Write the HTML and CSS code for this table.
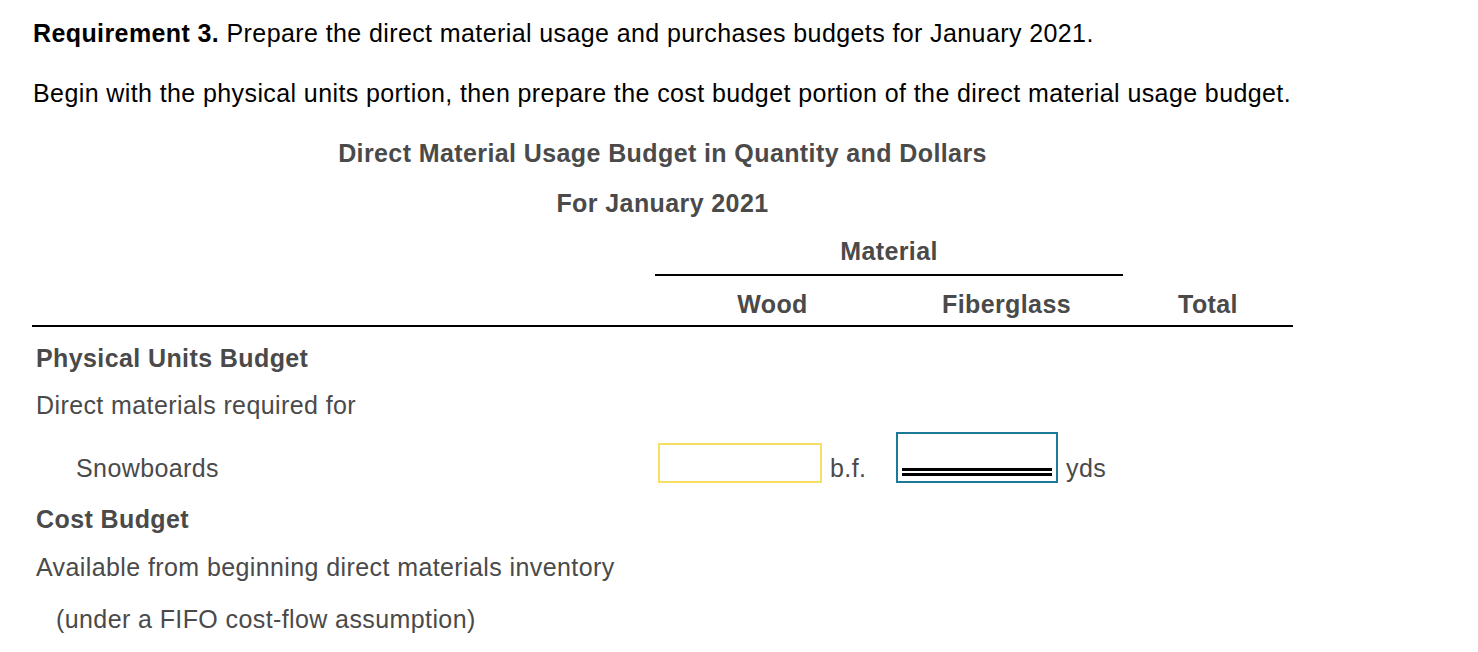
FILE: index.html
```html
<!DOCTYPE html>
<html>
<head>
<meta charset="utf-8">
<link rel="stylesheet" href="styles.css">
</head>
<body>
<div class="page">
  <p class="req"><b>Requirement 3.</b> Prepare the direct material usage and purchases budgets for January 2021.</p>
  <p class="intro">Begin with the physical units portion, then prepare the cost budget portion of the direct material usage budget.</p>
  <div class="budget">
    <div class="title">Direct Material Usage Budget in Quantity and Dollars</div>
    <div class="subtitle">For January 2021</div>
    <div class="grid">
      <div></div>
      <div class="material">Material</div>
      <div></div>

      <div class="hcell"></div>
      <div class="hcell center">Wood</div>
      <div class="hcell center">Fiberglass</div>
      <div class="hcell center">Total</div>

      <div class="row-label bold r1">Physical Units Budget</div>
      <div class="span3"></div>

      <div class="row-label r2">Direct materials required for</div>
      <div class="span3"></div>

      <div class="row-label r3 indent2">Snowboards</div>
      <div class="r3 incell">
        <span class="box yellow"></span><span class="unit">b.f.</span>
      </div>
      <div class="r3 incell">
        <span class="box blue"><span class="dbl"></span></span><span class="unit">yds</span>
      </div>
      <div class="r3"></div>

      <div class="row-label bold r4">Cost Budget</div>
      <div class="span3"></div>

      <div class="row-label r5">Available from beginning direct materials inventory</div>
      <div class="span3"></div>

      <div class="row-label r6 indent1">(under a FIFO cost-flow assumption)</div>
      <div class="span3"></div>
    </div>
  </div>
</div>
</body>
</html>
```

FILE: styles.css
```css
* { box-sizing: border-box; }
html, body { margin: 0; padding: 0; background: #fff; }
body {
  font-family: "Liberation Sans", Arial, sans-serif;
  font-size: 25px;
  letter-spacing: 0.4px;
  width: 1478px;
  height: 652px;
  overflow: hidden;
}
.page { padding: 8px 0 0 33px; }
.req, .intro {
  margin: 0;
  line-height: 50px;
  color: #000;
}
.intro { margin-top: 10px; }
.budget {
  width: 1261px;
  margin-left: -1px;
  color: #4a4a4a;
}
.title, .subtitle {
  text-align: center;
  font-weight: bold;
  line-height: 50px;
}
.title { margin-top: 10px; }
.grid {
  display: grid;
  grid-template-columns: 623px 235px 233px 170px;
}
.material {
  grid-column: span 2;
  text-align: center;
  font-weight: bold;
  line-height: 40px;
  padding: 3px 0 3px;
  border-bottom: 2px solid #000;
}
.hcell {
  font-weight: bold;
  line-height: 40px;
  padding: 8px 0 1px;
  border-bottom: 2px solid #000;
}
.center { text-align: center; }
.row-label { padding-left: 4px; }
.bold { font-weight: bold; }
.span3 { grid-column: span 3; }
.r1 { margin-top: 7px; line-height: 48px; }
.r2 { line-height: 47px; }
.r3 { height: 64px; }
.row-label.r3 { padding-top: 14px; line-height: 50px; }
.r4 { line-height: 52px; }
.r5 { line-height: 44px; }
.r6 { line-height: 60px; }
.indent2 { padding-left: 44px; }
.indent1 { padding-left: 24px; }
.incell {
  display: flex;
  align-items: flex-end;
  padding: 0 0 10px 3px;
}
.box {
  display: block;
  flex: none;
  border: 2px solid;
  background: #fff;
}
.yellow {
  width: 164px;
  height: 40px;
  border-color: #f7df63;
}
.blue {
  width: 162px;
  height: 51px;
  border-color: #1c7a98;
  position: relative;
  margin-left: 3px;
}
.dbl {
  position: absolute;
  left: 4px;
  right: 4px;
  top: 34px;
  height: 8px;
  border-top: 3px solid #000;
  border-bottom: 3px solid #000;
}
.unit {
  margin-left: 8px;
  line-height: 50px;
  margin-bottom: -10px;
}
```
